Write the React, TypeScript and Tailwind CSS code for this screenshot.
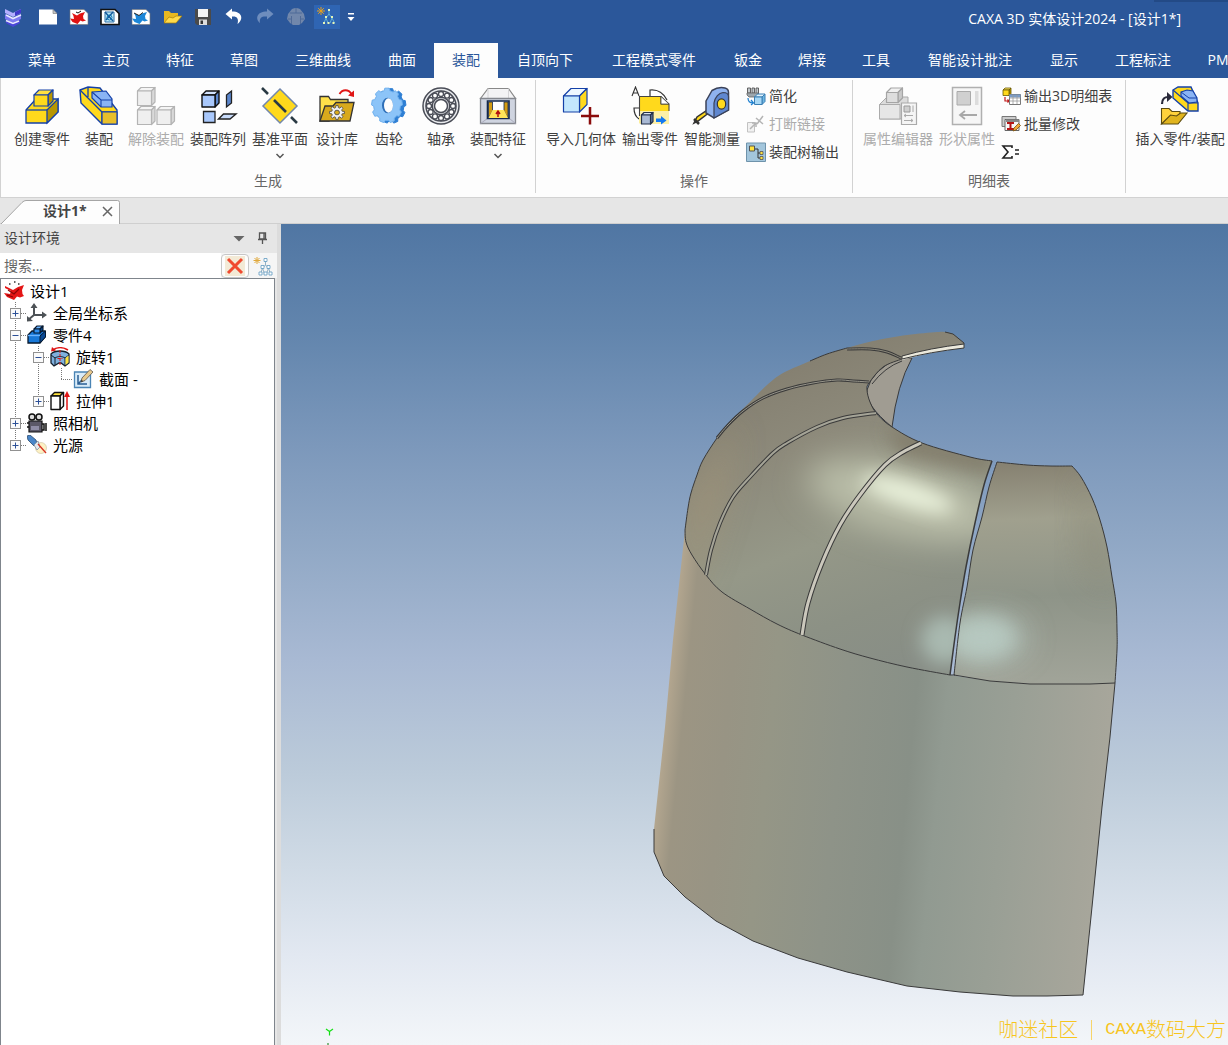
import { Fragment, type ReactNode } from 'react'

type CubeProps = {
  x: number
  y: number
  w: number
  h: number
  d: number
  front: string
  top: string
  side: string
  stroke: string
  sw?: number
}

// Box seen from the front left, used by most of the modelling icons
function Cube({ x, y, w, h, d, front, top, side, stroke, sw = 1.2 }: CubeProps) {
  return (
    <g stroke={stroke} strokeWidth={sw} strokeLinejoin="round">
      <path fill={top} d={`M${x} ${y}l${d} ${-d}h${w}l${-d} ${d}z`} />
      <path fill={side} d={`M${x + w} ${y}l${d} ${-d}v${h}l${-d} ${d}z`} />
      <path fill={front} d={`M${x} ${y}h${w}v${h}h${-w}z`} />
    </g>
  )
}

function gearPath(cx: number, cy: number, rx: number, ry: number, teeth: number, depth: number) {
  const pts: string[] = []
  for (let i = 0; i < teeth; i++) {
    const steps = [
      [-0.32, 1 - depth],
      [-0.2, 1],
      [0.2, 1],
      [0.32, 1 - depth],
    ]
    for (const [offset, r] of steps) {
      const a = ((i + offset) / teeth) * Math.PI * 2 - Math.PI / 2
      pts.push(`${(cx + Math.cos(a) * rx * r).toFixed(2)} ${(cy + Math.sin(a) * ry * r).toFixed(2)}`)
    }
  }
  return `M${pts.join('L')}Z`
}

// Smooth curve through a flat "x y x y" list. Without the leading M it can be appended to a path
function smooth(list: string, move = true) {
  const n = list.split(' ').map(Number)
  const p: [number, number][] = []
  for (let i = 0; i < n.length; i += 2) p.push([n[i], n[i + 1]])
  let d = `${move ? 'M' : 'L'}${p[0][0]} ${p[0][1]}`
  for (let i = 0; i < p.length - 1; i++) {
    const a = p[Math.max(i - 1, 0)]
    const b = p[i]
    const c = p[i + 1]
    const e = p[Math.min(i + 2, p.length - 1)]
    d += `C${b[0] + (c[0] - a[0]) / 6} ${b[1] + (c[1] - a[1]) / 6} ${c[0] - (e[0] - b[0]) / 6} ${c[1] - (e[1] - b[1]) / 6} ${c[0]} ${c[1]}`
  }
  return d
}

function Icon({ size = 40, children }: { size?: number; children: ReactNode }) {
  return (
    <svg width={size} height={size} viewBox={`0 0 ${size} ${size}`} fill="none" className="shrink-0" aria-hidden="true">
      {children}
    </svg>
  )
}

const navy = '#1440a8'

const icons = {
  createPart: (
    <Icon>
      <path d="M4 24 14 13h22v13L25 37H4z" fill="#ffd91c" stroke={navy} strokeWidth="1.3" />
      <path d="M25 24 36 13v13L25 37z" fill="#b89600" stroke={navy} strokeWidth="1.3" />
      <path d="M4 24h21" stroke={navy} strokeWidth="1.3" />
      <Cube x={12} y={9} w={14} h={11} d={5} front="#ffd91c" top="#ffe040" side="#b89600" stroke={navy} />
    </Icon>
  ),
  assemble: (
    <Icon>
      <path d="M1 4 9 1l12 1 17 22v14H23L2 17z" fill="#ffd91c" stroke={navy} strokeWidth="1.4" />
      <path d="M1 4 23 26h15M9 1v10M23 26v12" stroke={navy} strokeWidth="1.3" />
      <path d="M23 26h15v12H23z" fill="#e8bf2a" stroke={navy} strokeWidth="1.2" />
      <path d="m13 6 14-1 6 8v8H22l-9-9z" fill="#8ab4f4" stroke={navy} strokeWidth="1.2" />
      <path d="m13 6 9 8h11M22 14v7" stroke={navy} strokeWidth="1.1" />
    </Icon>
  ),
  disassemble: (
    <Icon>
      <Cube x={1.5} y={5} w={14} h={14.5} d={3.5} front="#efefef" top="#f5f5f5" side="#d9d9d9" stroke="#b4b4b4" />
      <Cube x={1.5} y={24} w={14} h={14.5} d={3.5} front="#efefef" top="#f5f5f5" side="#d9d9d9" stroke="#b4b4b4" />
      <Cube x={21} y={24} w={14} h={14.5} d={3.5} front="#efefef" top="#f5f5f5" side="#d9d9d9" stroke="#b4b4b4" />
    </Icon>
  ),
  pattern: (
    <Icon>
      <Cube x={4} y={9} w={13} h={12} d={4} front="#a9c8fb" top="#d3e3fd" side="#5b86cc" stroke="#111" sw={1.4} />
      <path d="m28.500 9 5-4v12l-5 4z" fill="#5b86cc" stroke="#222" strokeWidth="1.3" />
      <path d="M5.500 25.500h11.500v11H5.500z" fill="#a9c8fb" stroke="#222" strokeWidth="1.3" />
      <path d="m20.500 33 5-5h12.500l-6 5z" fill="#c9dcfb" stroke="#222" strokeWidth="1.4" />
    </Icon>
  ),
  datumPlane: (
    <Icon>
      <path d="m20 3 17 17-17 17L3 20z" fill="#ffd91c" stroke="#7187ad" strokeWidth="1.5" />
      <path d="m2 2 6 6M14 14l12 12M31 31l6 6" stroke="#2a3a44" strokeWidth="2.6" />
    </Icon>
  ),
  library: (
    <Icon>
      <path d="M3 35V10.500h8.500l2 3H31V19L12 35z" fill="#ffe04a" stroke="#333" strokeWidth="1.3" />
      <path d="m3 35 5-15h8l3-3.500h18L33 35z" fill="#d8a91c" stroke="#333" strokeWidth="1.3" />
      <path d={gearPath(20, 26.5, 7.5, 7, 8, 0.28)} fill="#f1f1f1" stroke="#444" strokeWidth=".8" />
      <ellipse cx="20" cy="26.500" rx="2.500" ry="2.300" fill="#d8a91c" stroke="#444" strokeWidth=".8" />
      <path d="M22.500 8c3-5 9-5 12 0" stroke="#e01515" strokeWidth="2" />
      <path d="m31 9.500 6 1.500V4.500z" fill="#e01515" />
    </Icon>
  ),
  gear: (
    <Icon>
      <path d={gearPath(21.5, 20, 15.5, 17.5, 9, 0.14)} fill="#2e7fd4" stroke="#2e7fd4" strokeLinejoin="round" />
      <path d={gearPath(18, 19.5, 15.5, 17.5, 9, 0.14)} fill="#8cc4f8" stroke="#6fb0ee" strokeLinejoin="round" />
      <ellipse cx="18.500" cy="19.500" rx="5.500" ry="7.800" fill="#2e6fb8" />
      <ellipse cx="19.500" cy="19.500" rx="4.500" ry="7.200" fill="#fdfdfd" />
    </Icon>
  ),
  bearing: (
    <Icon>
      <g stroke="#4a4d57" strokeWidth="1.500">
        <circle cx="20" cy="20" r="18" fill="#e9ebee" />
        <circle cx="20" cy="20" r="15" fill="#fff" />
        <circle cx="20" cy="20" r="8.800" fill="#d9dbdf" />
        <circle cx="20" cy="20" r="6.500" fill="#fff" />
        {Array.from({ length: 12 }, (_, i) => {
          const a = (i * Math.PI) / 6
          return <circle key={i} cx={20 + 12 * Math.cos(a)} cy={20 + 12 * Math.sin(a)} r="2.500" fill="#fff" strokeWidth="1.300" />
        })}
      </g>
    </Icon>
  ),
  assemblyFeature: (
    <Icon>
      <path d="M2.500 12.500 10 2.500h20.500l7 10z" fill="#f3f3f5" stroke="#888" strokeWidth="1.2" />
      <path d="M10 2.500v10M30.500 2.500v10" stroke="#d5d5d8" />
      <path d="M2.500 12.500h35v25h-35z" fill="#cfd4e0" stroke="#85888f" strokeWidth="1.3" />
      <path d="m2.500 37.500 7-5M37.500 37.500l-6-5" stroke="#aab" />
      <path d="M9.500 15h21.500v17.500H9.500z" fill="#fff" stroke="#14284c" strokeWidth="1.6" />
      <path d="M10.500 16h4v9l-4 7zM30 16h-4v9l4 7z" fill="#d39b12" stroke="#14284c" strokeWidth=".8" />
      <path d="m14.500 24h11.500l4 8H10.500z" fill="#ffe458" />
      <path d="M20 31v-5m-2 2 2-3 2 3" stroke="#b01010" strokeWidth="1.5" />
    </Icon>
  ),
  importGeometry: (
    <Icon>
      <Cube x={2.5} y={10} w={16} h={16} d={7.5} front="#c3e7fd" top="#eef8ff" side="#ffd91c" stroke={navy} />
      <path d="M20 30h18M29 21v17.500" stroke="#8a0b0b" strokeWidth="2.500" />
    </Icon>
  ),
  exportPart: (
    <Icon>
      <path d="m2 10 3.500-9L9 10M3.200 7h4.600" stroke="#333" strokeWidth="1.100" />
      <path d="M20 10V4c8-1 14 4 17 10M9 22H4c0 5 2 9 5 11" stroke="#333" strokeWidth="1.200" fill="#fff" />
      <path d="M9.500 10.500H31l8 7.500v19H9.500z" fill="#ffd91c" />
      <path d="M9.500 25h29.500v13H9.500z" fill="#fdf0a8" />
      <path d="M9.500 30V10.500H31l8 7.500v7M31 10.500V18h8" stroke="#444" strokeWidth="1.100" fill="none" />
      <path d="M31 10.500V18h8z" fill="#fff" stroke="#444" strokeWidth=".8" />
      <Cube x={11.5} y={29} w={9} h={9} d={2.5} front="#a9b9d4" top="#dbe4f2" side="#5f7599" stroke="#26324a" />
      <path d="M26 32.500h5V30l5.500 4.500-5.500 4v-2.500h-5z" fill="#1479f2" />
    </Icon>
  ),
  measure: (
    <Icon>
      <path d="m18 26-12 9-4 2 3-6 12-8z" fill="#ffd91c" stroke="#333" strokeWidth="1.500" />
      <path d="m2 33 5 5" stroke="#333" strokeWidth="2.500" />
      <path d="M14 15 20 4.500C24 2 29 1 33 2c2.500.6 3.500 2 3.500 4.500V24L22 32l-8-5z" fill="#8fb2ee" stroke="#3b4258" strokeWidth="1.500" />
      <path d="M22 32V17c1-6 5-10 9-10.500 4 0 5.500 1.500 5.500 4V24z" fill="#5f87cf" stroke="#3b4258" strokeWidth="1.200" />
      <ellipse cx="29.500" cy="18" rx="4.200" ry="5.200" fill="#ffd91c" stroke="#333" strokeWidth="1.200" />
    </Icon>
  ),
  propertyEditor: (
    <Icon>
      <path d="M1.500 18.500 9 11h21v12l-7 10H1.500z" fill="#dcdcdc" stroke="#ababab" />
      <path d="M1.500 18.500H22v14.500H1.500z" fill="#e6e6e6" stroke="#ababab" />
      <Cube x={8.5} y={6.5} w={11.5} h={10} d={4.5} front="#dedede" top="#f1f1f1" side="#c9c9c9" stroke="#a5a5a5" />
      <path d="M23.500 17h15v21.500h-15z" fill="#f5f5f5" stroke="#aaa" strokeWidth="1.200" />
      <path d="M26 20h6v6h-6z" fill="#cfcfcf" stroke="#999" />
      <path d="M35 19.500V26M26 29.500h9m-9 0 2-1.500m-2 1.500 2 1.500M26 34.500h9m0 0-2-1.500m2 1.500-2 1.500" stroke="#aaa" />
    </Icon>
  ),
  shapeProperty: (
    <Icon>
      <path d="M5.500 1.500h29v37h-29z" fill="#f6f6f6" stroke="#b0b0b0" strokeWidth="1.500" />
      <path d="M10 5.500h13.500V19H10z" fill="#d0d0d0" stroke="#aaa" />
      <path d="M28 5h3.500v14H28z" fill="#dcdcdc" />
      <path d="M13 29h17M18 25l-5 4 5 4" stroke="#a8a8a8" strokeWidth="1.800" />
    </Icon>
  ),
  insertPart: (
    <Icon>
      <path d="m13 4 5-3h13l7 16v8H28L13 12z" fill="#ffd91c" stroke={navy} strokeWidth="1.400" />
      <path d="m13 4 15 13h10M28 17v8" stroke={navy} strokeWidth="1.200" />
      <path d="m21 6 6-2 6 1 4 7v4l-8 1-8-7z" fill="#8ab4f4" stroke={navy} strokeWidth="1.200" />
      <path d="m21 6 8 6h8" stroke={navy} />
      <path d="M2 18c0-5 3-7 6-7" stroke="#2a2a3a" strokeWidth="2.200" />
      <path d="m7 6 5.500 5L7 16z" fill="#2a2a3a" />
      <path d="M1.500 38V22.500H9l3 3h8V30z" fill="#ffd23c" stroke="#5a4a10" strokeWidth="1.100" />
      <path d="m1.500 38 9-9 6 1 4-3h6.500L18 38z" fill="#e0b41e" stroke="#5a4a10" strokeWidth="1.100" />
    </Icon>
  ),
}

const smallIcons = {
  simplify: (
    <Icon size={20}>
      <path d="M1.500 2h3v5h-3zM6 2h2.500v5H6zM10 2h2.500v7H10z" fill="#c3c9cd" stroke="#555" strokeWidth=".9" />
      <path d="M1 7h11v3l-2 1H3L1 9z" fill="#9ea7ad" stroke="#666" strokeWidth=".8" />
      <path d="M2 12c0 3 2 5 5 5M5 14l2.500 3L5 19" stroke="#1c7fd0" strokeWidth="1.200" />
      <Cube x={8.5} y={11} w={7.5} h={7.5} d={3} front="#a8d8f5" top="#e1f3fd" side="#6fb7e2" stroke="#3a7fb4" sw={1} />
    </Icon>
  ),
  breakLink: (
    <Icon size={20}>
      <path d="M1.500 8.500h7v9.500h-7z" fill="#f1f1f1" stroke="#c2c2c2" />
      <path d="m4 15 6-6M6 9h4v4M10 4l7 6M17 2l-6 8" stroke="#b4b4b4" strokeWidth="1.500" />
    </Icon>
  ),
  treeExport: (
    <Icon size={20}>
      <path d="M.5 1h19v18.500H.5z" fill="#a3c6dc" stroke="#6f93ab" />
      <path d="M9 7h3v9h4M12 11h4" stroke="#333" />
      <path d="M3.500 4h5v5h-5z" fill="#ffe23c" stroke="#555" />
      <path d="M14 9.500h3v3h-3zM14 14.500h3v3h-3z" fill="#ffe23c" stroke="#555" strokeWidth=".8" />
    </Icon>
  ),
  bom: (
    <Icon size={20}>
      <Cube x={2} y={4} w={6} h={5.5} d={2} front="#ffd91c" top="#ffe868" side="#b89600" stroke="#6a5800" sw={0.8} />
      <path d="M4 11v4h4M6.500 13.500 8 15l-1.500 1.500" stroke="#c01818" strokeWidth="1.200" />
      <path d="M8.500 8.500h11v10h-11z" fill="#fff" stroke="#777" />
      <path d="M8.500 8.500h11v3h-11z" fill="#7a9cc8" />
      <path d="M8.500 12h11M8.500 15h11M12 9v9M16 9v9" stroke="#999" strokeWidth=".8" />
    </Icon>
  ),
  batchEdit: (
    <Icon size={20}>
      <path d="M1 2.500h14v10H1z" fill="#ccc" stroke="#777" />
      <path d="M4 5.500h14v11H4z" fill="#f7f7f7" stroke="#666" />
      <path d="M5 5.500h13v2.500H5z" fill="#888" />
      <path d="M6 9h7M6 15h7M9.500 9v6" stroke="#b41414" strokeWidth="2" />
      <path d="m12 17 1-3 4.500-4.500 2 2L15 16z" fill="#f3a93a" stroke="#7a5010" strokeWidth=".8" />
    </Icon>
  ),
  sigma: (
    <Icon size={20}>
      <path d="M11 6V4H2l5 6-5 6h9v-2" stroke="#222" strokeWidth="1.600" />
      <path d="M14 8h4M14 12h4" stroke="#222" strokeWidth="1.600" />
    </Icon>
  ),
}

type Tool = { label: string; icon: ReactNode; width: string; menu?: boolean; disabled?: boolean }

const createTools: Tool[] = [
  { label: '创建零件', icon: icons.createPart, width: 'w-[62px]' },
  { label: '装配', icon: icons.assemble, width: 'w-[52px]' },
  { label: '解除装配', icon: icons.disassemble, width: 'w-[62px]', disabled: true },
  { label: '装配阵列', icon: icons.pattern, width: 'w-[62px]' },
  { label: '基准平面', icon: icons.datumPlane, width: 'w-[62px]', menu: true },
  { label: '设计库', icon: icons.library, width: 'w-[52px]' },
  { label: '齿轮', icon: icons.gear, width: 'w-[52px]' },
  { label: '轴承', icon: icons.bearing, width: 'w-[52px]' },
  { label: '装配特征', icon: icons.assemblyFeature, width: 'w-[62px]', menu: true },
]

const operateTools: Tool[] = [
  { label: '导入几何体', icon: icons.importGeometry, width: 'w-[76px]' },
  { label: '输出零件', icon: icons.exportPart, width: 'w-[62px]' },
  { label: '智能测量', icon: icons.measure, width: 'w-[62px]' },
]

const bomTools: Tool[] = [
  { label: '属性编辑器', icon: icons.propertyEditor, width: 'w-[76px]', disabled: true },
  { label: '形状属性', icon: icons.shapeProperty, width: 'w-[62px]', disabled: true },
]

type SmallTool = { label: string; icon: ReactNode; disabled?: boolean; hideLabel?: boolean }

const operateSmall: SmallTool[] = [
  { label: '简化', icon: smallIcons.simplify },
  { label: '打断链接', icon: smallIcons.breakLink, disabled: true },
  { label: '装配树输出', icon: smallIcons.treeExport },
]

const bomSmall: SmallTool[] = [
  { label: '输出3D明细表', icon: smallIcons.bom },
  { label: '批量修改', icon: smallIcons.batchEdit },
  { label: '公式', icon: smallIcons.sigma, hideLabel: true },
]

function ToolButton({ tool }: { tool: Tool }) {
  return (
    <button
      type="button"
      disabled={tool.disabled}
      className={`${tool.width} mt-1 flex shrink-0 flex-col items-center gap-[3px] whitespace-nowrap text-[#3f3f3f] disabled:text-[#acacac]`}
    >
      {tool.icon}
      <span className="leading-5">{tool.label}</span>
      {tool.menu && (
        <svg width="10" height="8" viewBox="0 0 10 8" fill="none" aria-hidden="true">
          <path d="m1.500 2 3.500 3.500L8.500 2" stroke="#555" strokeWidth="1.500" />
        </svg>
      )}
    </button>
  )
}

function SmallToolList({ tools }: { tools: SmallTool[] }) {
  return (
    <div className="flex shrink-0 flex-col items-start pl-[3px]">
      {tools.map(tool => (
        <button
          key={tool.label}
          type="button"
          disabled={tool.disabled}
          aria-label={tool.label}
          className="flex h-7 items-center gap-[3px] whitespace-nowrap text-[#3f3f3f] disabled:text-[#acacac]"
        >
          {tool.icon}
          {!tool.hideLabel && <span>{tool.label}</span>}
        </button>
      ))}
    </div>
  )
}

function RibbonGroup({ label, className, children }: { label?: string; className: string; children: ReactNode }) {
  return (
    <section className="flex shrink-0 flex-col border-r border-[#d2d2d2] last:border-r-0">
      <div className={`flex flex-1 items-start pt-[2px] ${className}`}>{children}</div>
      <div className="mb-[2px] h-5 text-center leading-5 text-[#666]">{label}</div>
    </section>
  )
}

const quickActions: { label: string; icon: ReactNode; active?: boolean }[] = [
  {
    label: '新建',
    icon: (
      <Icon size={20}>
        <path d="M1 2.500h14l4 4v11H1z" fill="#fff" />
        <path d="M15 2.500v4h4z" fill="#c8c8c8" stroke="#777" strokeWidth=".6" />
      </Icon>
    ),
  },
  {
    label: '新建设计',
    icon: (
      <Icon size={20}>
        <path d="M1 2.500h14l4 4v11H1z" fill="#fff" stroke="#777" strokeWidth=".6" />
        <path d="m3 6 5 2.500 3-2 5-1.500-2 4 .5 3 2.500 1.500-3.500 1-2-1-3 3.500-5-2-2.500-3.500 4 .5-.5-3z" fill="#e01212" />
        <path d="m7 5 2 1 3-2" stroke="#111" />
      </Icon>
    ),
  },
  {
    label: '新建图纸',
    icon: (
      <Icon size={20}>
        <path d="M1 2.500h14l4 4v11H1z" fill="#fff" stroke="#111" strokeWidth="1.600" />
        <path d="M5 5h9v10H5z" fill="#bfeaf8" stroke="#2b6ea8" />
        <path d="m5 5 8 9M13 5l-7 8" stroke="#155a9c" strokeWidth="1.500" />
        <circle cx="9.500" cy="10.500" r="2.500" stroke="#0c76b8" />
      </Icon>
    ),
  },
  {
    label: '新建零件',
    icon: (
      <Icon size={20}>
        <path d="M1 2.500h14l4 4v11H1z" fill="#fff" stroke="#777" strokeWidth=".6" />
        <path d="m3 6 5 2.500 3-2 5-1.500-2 4 .5 3 2.500 1.500-3.500 1-2-1-3 3.500-5-2-2.500-3.500 4 .5-.5-3z" fill="#1c86d8" />
        <path d="m3 6 5 2.500 4-3" stroke="#222" />
      </Icon>
    ),
  },
  {
    label: '打开',
    icon: (
      <Icon size={20}>
        <path d="M2 16V4h5l2 2h7v4z" fill="#e8b820" />
        <path d="m2 16 5-6 4 1 3-2h6l-6 7z" fill="#ffda4a" stroke="#a37c08" strokeWidth=".7" />
      </Icon>
    ),
  },
  {
    label: '保存',
    icon: (
      <Icon size={20}>
        <path d="M2 2h16v16H4l-2-2z" fill="#4a4a4a" />
        <path d="M5 2h10v8H5z" fill="#f4f4f4" />
        <path d="M6 12.500h8V18H6z" fill="#ddd" />
        <path d="M7.500 13.500H10V17H7.500z" fill="#333" />
      </Icon>
    ),
  },
  {
    label: '撤销',
    icon: (
      <Icon size={20}>
        <path d="M8 1.500 1.500 7 8 12.500V9.500c5-.5 7 2 5.500 7.500 6-4 5.500-12.500-5.500-12.500z" fill="#fff" />
      </Icon>
    ),
  },
  {
    label: '重做',
    icon: (
      <Icon size={20}>
        <path d="M12 1.500 18.500 7 12 12.500V9.500c-5-.5-8 1-7 6.500-5-4-3.500-11.500 7-11.500z" fill="#6e8dbd" />
      </Icon>
    ),
  },
  {
    label: '球标',
    icon: (
      <Icon size={20}>
        <path d="M6 2c3-1.500 5-1.500 8 0l4 5 1 5-3 4-3 2H7l-3-2-3-4 1-5z" fill="#7187ab" />
        <path d="M4 6h12M10 1v5M5.500 9v8M14.500 9v8M2 12h3M15 12h3" stroke="#4f6a98" />
      </Icon>
    ),
  },
  {
    label: '设计树',
    active: true,
    icon: (
      <Icon size={20}>
        <path d="M4 0v8M0 4h8M1.200 1.200l5.600 5.600M6.800 1.200 1.200 6.800" stroke="#e8a01c" />
        <path d="M12 3v4M12 7l-3 4M12 7l3 4M9 11l-2 5M9 11l2 5M15 11l-2 5M15 11l2.500 5" stroke="#5fb0d8" />
        <path d="M11 2h2v2h-2zM8 9h2v2H8zM14 9h2v2h-2zM6 15h2v2H6zM10.500 15h2v2h-2zM15.500 15h2v2h-2z" fill="#e5f5b8" />
      </Icon>
    ),
  },
]

function TitleBar() {
  return (
    <header className="relative flex h-[34px] items-center bg-[#2b579a] text-white">
      <div className="flex w-8 shrink-0 pl-[3px]">
        <Icon size={20}>
          <path d="m2 2 8 4 8-4v4l-8 4-8-4z" fill="#b3aeff" />
          <path d="m2 7 8 4 8-4v5l-8 4-8-4z" fill="#7c78f0" />
          <path d="m3 13 7 3 7-3v3l-7 4-7-4z" fill="#4a46d8" />
          <path d="m3 8 7 3.500L18 8M3 13.500l7 3 6-2.500" stroke="#e8e8ff" strokeWidth="1.600" />
          <path d="m12 5 6-3v4l-6 3z" fill="#4038c8" />
        </Icon>
      </div>
      {quickActions.map(action => (
        <button
          key={action.label}
          type="button"
          aria-label={action.label}
          className="flex h-6 w-[31px] shrink-0 items-center justify-center"
        >
          <span className={action.active ? 'flex h-6 w-[26px] items-center justify-center bg-[#2f65b3]' : 'flex'}>{action.icon}</span>
        </button>
      ))}
      <button type="button" aria-label="自定义快速访问工具栏" className="flex w-[18px] shrink-0 justify-center">
        <svg width="8" height="9" viewBox="0 0 8 9" aria-hidden="true">
          <path d="M1 0h6v1.500H1zM.5 4h7L4 8z" fill="#fff" />
        </svg>
      </button>
      <h1 className="ml-auto pt-1 pr-[47px] text-sm leading-5 whitespace-nowrap">CAXA 3D 实体设计2024 - [设计1*]</h1>
      <div className="absolute top-0 right-0 h-0.5 w-[74px] bg-[#234a86]" />
    </header>
  )
}

const menuTabs = [
  { label: '菜单', width: 'w-[84px]' },
  { label: '主页', width: 'w-16' },
  { label: '特征', width: 'w-16' },
  { label: '草图', width: 'w-16' },
  { label: '三维曲线', width: 'w-[94px]' },
  { label: '曲面', width: 'w-16' },
  { label: '装配', width: 'w-16' },
  { label: '自顶向下', width: 'w-[94px]' },
  { label: '工程模式零件', width: 'w-[124px]' },
  { label: '钣金', width: 'w-16' },
  { label: '焊接', width: 'w-16' },
  { label: '工具', width: 'w-16' },
  { label: '智能设计批注', width: 'w-[124px]' },
  { label: '显示', width: 'w-16' },
  { label: '工程标注', width: 'w-[94px]' },
  { label: 'PMI', width: 'w-[60px]' },
]

function MenuTabs() {
  return (
    <nav className="flex h-11 items-end overflow-hidden bg-[#2b579a] text-white">
      {menuTabs.map(tab => (
        <button
          key={tab.label}
          type="button"
          className={`${tab.width} h-[35px] shrink-0 pb-[2px] whitespace-nowrap ${tab.label === '装配' ? 'bg-[#fdfdfd] text-[#2b579a]' : ''}`}
        >
          {tab.label}
        </button>
      ))}
    </nav>
  )
}

function Ribbon() {
  return (
    <div className="flex h-[120px] overflow-hidden border-b border-l border-[#d2d2d2] bg-[#fdfdfd] pt-[2px] pb-1">
      <RibbonGroup label="生成" className="pr-[6px] pl-[10px]">
        {createTools.map(tool => (
          <ToolButton key={tool.label} tool={tool} />
        ))}
      </RibbonGroup>
      <RibbonGroup label="操作" className="pr-[13px] pl-[7px]">
        {operateTools.map(tool => (
          <ToolButton key={tool.label} tool={tool} />
        ))}
        <SmallToolList tools={operateSmall} />
      </RibbonGroup>
      <RibbonGroup label="明细表" className="pr-[13px] pl-[7px]">
        {bomTools.map(tool => (
          <ToolButton key={tool.label} tool={tool} />
        ))}
        <SmallToolList tools={bomSmall} />
      </RibbonGroup>
      <RibbonGroup className="pl-[6px]">
        <ToolButton tool={{ label: '插入零件/装配', icon: icons.insertPart, width: 'w-[96px]' }} />
      </RibbonGroup>
    </div>
  )
}

function DocumentTabs() {
  return (
    <div className="flex h-[26px] items-end border-b border-[#cfcfcf] bg-[#e6e6e6]">
      <div className="relative flex h-6 w-[120px] items-center justify-between pr-[7px] pl-[43px]">
        <svg className="absolute inset-0" width="120" height="25" viewBox="0 0 120 25" aria-hidden="true">
          <path d="M1 25 22 3.500Q24 1.500 26 1.500h91.500q2 0 2 2V25" fill="#fdfdfd" stroke="#a5a5a5" />
        </svg>
        <a href="#design" className="relative text-sm font-bold whitespace-nowrap text-[#444]">
          设计1*
        </a>
        <button type="button" aria-label="关闭" className="relative">
          <svg width="11" height="11" viewBox="0 0 11 11" aria-hidden="true">
            <path d="m1 1 9 9M10 1l-9 9" stroke="#666" strokeWidth="1.500" />
          </svg>
        </button>
      </div>
    </div>
  )
}

const treeIcons = {
  scene: (
    <Icon size={20}>
      <path d="m1 5 8 4 5-3 6-2-2 5 .5 4L20 15l-4 1.500-3-1-3 3.500-7-3-3-4 6 1 1-3-6-3z" fill="#e41515" />
      <path d="m4 9 6 4 5-5M3 14l6 2" stroke="#8b0505" strokeWidth="1.200" />
      <path d="M5 3h1.500M10 1h1.500M14 3h1.500" stroke="#333" strokeWidth="1.500" />
    </Icon>
  ),
  axes: (
    <Icon size={20}>
      <path d="M7 2v10h10M7 12l-6 5" stroke="#4d5256" strokeWidth="2" />
      <path d="M7 0 3.500 5h7zM20 12l-5-3.500v7zM0 18.500V13l6 5z" fill="#4d5256" />
    </Icon>
  ),
  part: (
    <Icon size={20}>
      <path d="m1 10 4-4h13v6l-5 6H1z" fill="#1878d8" stroke="#06182e" strokeWidth="1.300" />
      <path d="M13 11 18.500 6v6L13 18z" fill="#0b4a94" stroke="#06182e" />
      <path d="M1 10.500h12" stroke="#6db4ff" strokeWidth="1.300" />
      <Cube x={7} y={4} w={6} h={4} d={3} front="#2d8ef0" top="#6db4ff" side="#0b4a94" stroke="#06182e" sw={1.1} />
    </Icon>
  ),
  revolve: (
    <Icon size={20}>
      <path d="M1 7c4-4 14-4 18 0v9l-4 3-4-3H9l-5 3-3-3z" fill="#7fb0de" stroke="#15202c" strokeWidth="1.300" />
      <path d="m1 8 4 3c3-2 7-2 10 0l4-3M5 11v7M15 11v7" stroke="#15202c" />
      <path d="m15.500 11 3-2.500v7l-3 2.500z" fill="#ffe23c" />
      <path d="M3 3c4-3 10-3 15 0" stroke="#e01515" strokeWidth="1.600" />
      <path d="M1 4.500 2 0l4 3.500z" fill="#e01515" />
      <path d="M10 3v15M7.500 11.500h5" stroke="#e01515" strokeDasharray="3 1" />
    </Icon>
  ),
  section: (
    <Icon size={20}>
      <path d="M1.500 3h16v15.500h-16z" fill="#d9ebf8" stroke="#4a84b4" strokeWidth="1.300" />
      <path d="M5 6v9h9M5 15l6-6" stroke="#2a5f94" strokeWidth="1.500" />
      <path d="m8 13 1-4 8-8.500 3 2.500-8 8.500z" fill="#e8c98c" stroke="#6b6258" strokeWidth=".9" />
      <path d="m8 13 .6-2.200 1.600 1.500z" fill="#333" />
    </Icon>
  ),
  extrude: (
    <Icon size={20}>
      <Cube x={1} y={5} w={9} h={13.5} d={3.5} front="#fff" top="#ffe23c" side="#f2f2f2" stroke="#111" sw={1.4} />
      <path d="M17 19V4" stroke="#e01515" strokeWidth="1.500" />
      <path d="m14 6 3-6 3 6z" fill="#e01515" />
    </Icon>
  ),
  camera: (
    <Icon size={20}>
      <circle cx="5" cy="4" r="3" fill="#ddd" stroke="#111" strokeWidth="1.500" />
      <circle cx="12" cy="4" r="3" fill="#ddd" stroke="#111" strokeWidth="1.500" />
      <path d="M2 8h13v11H2z" fill="#5b5868" stroke="#111" strokeWidth="1.200" />
      <path d="M4 13h8v4H4z" fill="#8f8ca6" />
      <path d="M0 10h2M0 14h2M15 11h2v6h-2M19 10v8" stroke="#111" strokeWidth="1.500" />
    </Icon>
  ),
  light: (
    <Icon size={20}>
      <circle cx="14" cy="13" r="5.500" fill="#fdf1c4" stroke="#c9c0a0" strokeWidth=".6" />
      <path d="m0 1 3-1 6 5 1 4-3 2L1 5z" fill="#4a86c8" stroke="#2b4a70" strokeWidth=".8" />
      <path d="m7 10 4-4 2 6-3 3z" fill="#e4e9ee" stroke="#8593a0" strokeWidth=".8" />
      <path d="m11 9 8 9" stroke="#d83020" strokeWidth="1.300" />
    </Icon>
  ),
}

type Guide = 'line' | 'elbow' | 'plus' | 'minus' | 'plusLast'

const treeRows: { label: string; icon: ReactNode; guides: Guide[] }[] = [
  { label: '设计1', icon: treeIcons.scene, guides: [] },
  { label: '全局坐标系', icon: treeIcons.axes, guides: ['plus'] },
  { label: '零件4', icon: treeIcons.part, guides: ['minus'] },
  { label: '旋转1', icon: treeIcons.revolve, guides: ['line', 'minus'] },
  { label: '截面 -', icon: treeIcons.section, guides: ['line', 'line', 'elbow'] },
  { label: '拉伸1', icon: treeIcons.extrude, guides: ['line', 'plusLast'] },
  { label: '照相机', icon: treeIcons.camera, guides: ['plus'] },
  { label: '光源', icon: treeIcons.light, guides: ['plusLast'] },
]

function TreeGuide({ kind }: { kind: Guide }) {
  const last = kind === 'elbow' || kind === 'plusLast'
  const expandable = kind !== 'line' && kind !== 'elbow'
  const open = kind === 'minus'
  const drawing = (
    <svg width="23" height="22" viewBox="0 0 23 22" fill="none" aria-hidden="true">
      <path d={last ? 'M11.500 0v11' : 'M11.500 0v22'} stroke="#777" strokeDasharray="1 1" />
      {kind !== 'line' && <path d="M11 11.500h12" stroke="#777" strokeDasharray="1 1" />}
      {expandable && (
        <>
          <rect x="6.500" y="6.500" width="10" height="10" fill="#fafafa" stroke="#919191" />
          <path d={open ? 'M8.500 11.500h6' : 'M8.500 11.500h6M11.500 8.500v6'} stroke="#2b4f96" />
        </>
      )}
    </svg>
  )
  return expandable ? (
    <button type="button" aria-label={open ? '折叠' : '展开'} className="w-[23px] shrink-0">
      {drawing}
    </button>
  ) : (
    <span className="w-[23px] shrink-0">{drawing}</span>
  )
}

function DesignPanel() {
  return (
    <aside className="flex w-[281px] shrink-0 flex-col border-r-4 border-[#dcdcdc] bg-[#e6e6e6]">
      <div className="flex h-[29px] shrink-0 items-center pr-[9px] pb-[2px] pl-1 text-[#444]">
        <h2 className="text-sm">设计环境</h2>
        <button type="button" aria-label="面板菜单" className="ml-auto">
          <svg width="12" height="12" viewBox="0 0 12 12" aria-hidden="true">
            <path d="M.5 4h11L6 9.500z" fill="#666" />
          </svg>
        </button>
        <button type="button" aria-label="固定" className="ml-3">
          <svg width="11" height="12" viewBox="0 0 11 12" fill="none" aria-hidden="true">
            <path d="M2.500 1h6v6h-6zM7 1v6M1 7.500h9M5.500 8v4" stroke="#555" strokeWidth="1.300" />
          </svg>
        </button>
      </div>
      <div className="flex h-[25px] shrink-0 items-center bg-[#f5f5f5]">
        <input
          type="text"
          aria-label="搜索"
          placeholder="搜索..."
          className="h-full min-w-0 flex-1 bg-white pl-1 text-sm outline-none placeholder:text-[#666]"
        />
        <button
          type="button"
          aria-label="清除"
          className="flex h-6 w-7 items-center justify-center rounded border border-[#c6c6c6] bg-[#fdfdfd]"
        >
          <span className="flex h-5 w-5 items-center justify-center bg-[#f3ead6]">
            <svg width="18" height="18" viewBox="0 0 18 18" aria-hidden="true">
              <path d="m2 2 14 14M16 2 2 16" stroke="#f04a30" strokeWidth="3" />
            </svg>
          </span>
        </button>
        <button type="button" aria-label="筛选" className="flex w-7 justify-center">
          <Icon size={20}>
            <path d="M4 1v7M.5 4.500h7M1.500 2l5 5M6.500 2l-5 5" stroke="#e0a83a" />
            <path d="M12.500 5v4M12.500 9l-3 3 -2 6M12.500 9l3 3 2 6M9.500 12l2 6M15.500 12l-2 6" stroke="#7aa0b8" strokeWidth=".8" />
            <path d="M11 2.500h3v3h-3zM8 9.500h3v3H8zM14 9.500h3v3h-3zM6 16h3v3H6zM11 16h3v3h-3zM16 16h3v3h-3z" fill="#fff" stroke="#5f9ac0" strokeWidth=".8" />
          </Icon>
        </button>
      </div>
      <ul className="mr-[2px] flex-1 border border-b-0 border-[#7f858c] bg-white pt-px pl-[3px] text-[15px] text-black">
        {treeRows.map(row => (
          <li key={row.label} className="flex h-[22px] items-center whitespace-nowrap">
            {row.guides.map((guide, i) => (
              <Fragment key={i}>
                <TreeGuide kind={guide} />
              </Fragment>
            ))}
            {row.icon}
            <a href="#node" className="pl-[6px] leading-[22px]">
              {row.label}
            </a>
          </li>
        ))}
      </ul>
    </aside>
  )
}

const outerEdge = '685 530 688 508 691 493 697 475 703 460 717 438 728 424 750 402 767 385 783 373 810 361 827 354 847 348 873 341 907 335 937 332 945 332 953 334 964 343'
const innerEdge = '902 359 883 367 869 383 867 390 870 402 877 414 892 427 922 443 970 457 992 461'
const gapLeft = '992 461 984 485 975 523 966 567 960 603 955 637 950 675'
const gapRight = '954 675 960 623 967 587 973 550 982 517 989 487 997 462'
const baseSeam = '950 675 907 667 870 658 840 649 802 635 777 624 750 609 722 592 706 575 692 555 686 542 685 530'
const rightTop = '997 462 1027 465 1050 466 1072 466'
const rightEdge = '1072 466 1081 477 1092 498 1100 520 1107 547 1112 577 1116 603 1117 630 1117 650 1115 683'

const capPath = `${smooth(outerEdge)}L964 348L933 352${smooth(innerEdge, false)}${smooth(gapLeft, false)}${smooth(baseSeam, false)}Z`
const rightCapPath = `${smooth(rightTop)}${smooth(rightEdge, false)}L1090 684H1030L990 681${smooth(gapRight, false)}Z`
const bodyPath =
  'M685 530 673 640 665 727 654 829V852L664 876 685 897 716 921 753 941 798 958 847 972 907 986 960 992 1013 996 1047 996 1083 995 1092 907 1102 807 1110 737 1115 683 1090 684 1030 684 990 681 950 675 907 667 870 658 840 649 802 635 777 624 750 609 722 592 706 575 692 555 686 542Z'

const seams = [
  { d: smooth('847 349 870 349 887 352 901 358'), outer: 3, inner: 1, fill: '#8b887a' },
  { d: smooth('717 438 728 425 743 411 763 398 787 389 813 383 837 380 853 381 869 382'), outer: 3, inner: 1, fill: '#97958a' },
  { d: smooth('706 575 711 550 720 523 733 497 750 477 773 453 787 443 817 427 843 418 876 413'), outer: 4, inner: 2, fill: '#a5a497' },
  { d: smooth('802 635 808 603 822 563 840 525 860 495 885 465 903 452 921 443'), outer: 5, inner: 3, fill: '#cbc8bc' },
]

function Model() {
  return (
    <svg viewBox="281 224 947 821" preserveAspectRatio="xMaxYMin meet" className="block h-full w-full" role="img" aria-label="设计1">
      <defs>
        <linearGradient id="body" gradientUnits="userSpaceOnUse" x1="673" y1="640" x2="1113" y2="684">
          <stop offset="0" stopColor="#b3a68f" />
          <stop offset=".04" stopColor="#9c9583" />
          <stop offset=".14" stopColor="#989484" />
          <stop offset=".24" stopColor="#959686" />
          <stop offset=".4" stopColor="#8e9388" />
          <stop offset=".56" stopColor="#889087" />
          <stop offset=".63" stopColor="#919a91" />
          <stop offset=".78" stopColor="#999f95" />
          <stop offset="1" stopColor="#a7a69b" />
        </linearGradient>
        <linearGradient id="cap" gradientUnits="userSpaceOnUse" x1="780" y1="370" x2="900" y2="665">
          <stop offset="0" stopColor="#858071" />
          <stop offset=".25" stopColor="#8d8a7b" />
          <stop offset=".55" stopColor="#959888" />
          <stop offset=".8" stopColor="#8c9185" />
          <stop offset="1" stopColor="#888e86" />
        </linearGradient>
        <linearGradient id="rightCap" gradientUnits="userSpaceOnUse" x1="1030" y1="464" x2="1040" y2="684">
          <stop offset="0" stopColor="#878272" />
          <stop offset=".25" stopColor="#a0a08e" />
          <stop offset=".6" stopColor="#8e9488" />
          <stop offset="1" stopColor="#a1a499" />
        </linearGradient>
        <filter id="soft" x="-60%" y="-60%" width="220%" height="220%">
          <feGaussianBlur stdDeviation="16" />
        </filter>
        <filter id="softer" x="-60%" y="-60%" width="220%" height="220%">
          <feGaussianBlur stdDeviation="9" />
        </filter>
        <clipPath id="capClip">
          <path d={capPath} />
        </clipPath>
        <clipPath id="rightClip">
          <path d={rightCapPath} />
        </clipPath>
      </defs>

      <path d={bodyPath} fill="url(#body)" />
      <path d="M912 358Q897 385 892 427Q865 405 867 390 872 370 899 358Z" fill="#a09c92" stroke="#3a3a3a" />
      <path d={capPath} fill="url(#cap)" />
      <g clipPath="url(#capClip)">
        <path d="M680 600 690 500 735 420 725 490 700 570Z" fill="#a29478" opacity=".7" filter="url(#soft)" />
        <ellipse cx="905" cy="500" rx="100" ry="34" transform="rotate(14 905 500)" fill="#b9bda8" filter="url(#soft)" />
        <ellipse cx="908" cy="494" rx="48" ry="12" transform="rotate(18 908 494)" fill="#eaf2dc" filter="url(#softer)" />
        <path d="M885 425 1000 455 990 475 900 455Z" fill="#7f7866" opacity=".8" filter="url(#softer)" />
        <ellipse cx="945" cy="640" rx="24" ry="24" fill="#a9b9b0" filter="url(#softer)" />
      </g>
      <path d={rightCapPath} fill="url(#rightCap)" />
      <g clipPath="url(#rightClip)">
        <ellipse cx="985" cy="638" rx="40" ry="22" fill="#b9ccc4" opacity=".9" filter="url(#soft)" />
        <ellipse cx="980" cy="638" rx="34" ry="20" fill="#b9ccc4" opacity=".7" filter="url(#softer)" />
        <path d="M1075 460 1105 530 1110 600 1085 570Z" fill="#8b8a79" opacity=".7" filter="url(#soft)" />
      </g>

      <path d="M902 356Q930 348 964 344V348Q930 352 902 360Z" fill="#ebe9dc" />
      <g fill="none" stroke="#3a3a3a">
        <path d="M945 332 953 334 964 343V348Q930 352 902 359V356Q930 348 964 344" />
        <path d={smooth('847 348 827 354 810 361')} />
        <path d={smooth('728 424 717 438 703 460 697 475 691 493 688 508 685 530')} />
        <path d={smooth(baseSeam)} />
        <path d={smooth(innerEdge)} />
        <path d={smooth(gapLeft)} strokeWidth="1.500" />
        <path d="M902 361Q885 367 872 384" />
        <path d={rightCapPath} />
        <path d="M950 675h5" />
        <path d="M1115 683 1110 737 1102 807 1092 907 1083 995 1047 996H1013L960 992 907 986 847 972 798 958 753 941 716 921 685 897 664 876 654 852V829" />
        {seams.map(seam => (
          <g key={seam.d}>
            <path d={seam.d} strokeWidth={seam.outer} />
            <path d={seam.d} stroke={seam.fill} strokeWidth={seam.inner} />
          </g>
        ))}
      </g>
      <path d="m326 1029 3.500 2.500 3.500-2.500M329.500 1031.500v4" stroke="#12e012" strokeWidth="1.200" fill="none" />
      <path d="M327 1044h2" stroke="#0a7a0a" />
    </svg>
  )
}

function Viewport() {
  return (
    <main className="relative min-w-0 flex-1 overflow-hidden bg-[linear-gradient(180deg,#5076a3_0%,#6285ad_13%,#7c98bb_27%,#92a9c6_40%,#a8b9d3_53%,#bccbda_67%,#cfdae5_78%,#e2e8f1_89%,#f3f6f9_100%)]">
      <Model />
      <p className="absolute right-[2px] bottom-0 flex items-center font-['Liberation_Serif','Noto_Sans_CJK_SC',serif] text-xl leading-[30px] font-light whitespace-nowrap text-[#f7c51e]">
        咖迷社区
        <span className="mx-[13px] h-5 w-px bg-[#f7d56a]" />
        <span className="font-['Liberation_Mono',monospace] text-[17px]">CAXA</span>
        数码大方
      </p>
    </main>
  )
}

export default function App() {
  return (
    <div className="flex h-screen flex-col overflow-hidden bg-[#e6e6e6] font-['Open_Sans','Noto_Sans_CJK_SC',sans-serif] text-sm">
      <TitleBar />
      <MenuTabs />
      <Ribbon />
      <DocumentTabs />
      <div className="flex min-h-0 flex-1">
        <DesignPanel />
        <Viewport />
      </div>
    </div>
  )
}
